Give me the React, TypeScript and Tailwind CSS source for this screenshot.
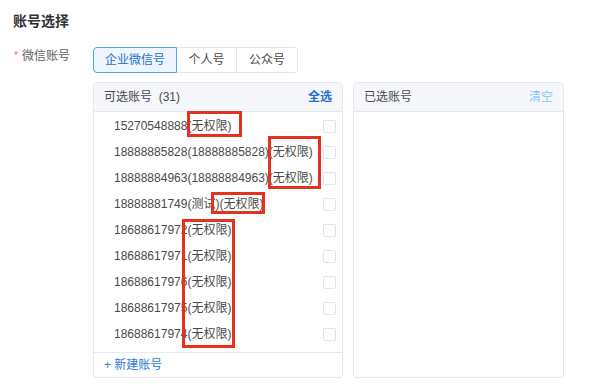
import React from "react";

const rows: { num: string; extra?: string }[] = [
  { num: "15270548888" },
  { num: "18888885828", extra: "(18888885828)" },
  { num: "18888884963", extra: "(18888884963)" },
  { num: "18888881749", extra: "(测试)" },
  { num: "18688617972" },
  { num: "18688617971" },
  { num: "18688617976" },
  { num: "18688617975" },
  { num: "18688617974" },
];

const font = { fontFamily: '"Liberation Sans", "Noto Sans CJK SC", sans-serif' };

export default function App() {
  return (
    <div
      className="relative w-[591px] h-[388px] bg-white pl-[13px] pt-[11px] text-[#333]"
      style={font}
    >
      <div className="text-[14px] font-bold leading-[20px] text-[#303133]">账号选择</div>
      <div className="flex mt-[16px]">
        <div className="w-[80px] flex items-start pt-[1px] text-[12px] leading-[16px] text-[#606266]">
          <span className="text-[#f56c6c] text-[10px] mr-[4px] ml-[1px]">*</span>
          <span>微信账号</span>
        </div>
        <div className="flex flex-col">
          <div className="flex h-[26px] text-[12px]">
            <div className="w-[84px] flex items-center justify-center rounded-l-[4px] border border-[#5a9ef0] bg-[#eef5fe] text-[#2570c9]">
              企业微信号
            </div>
            <div className="w-[60px] flex items-center justify-center border-y border-r border-[#e2e5ea] text-[#4a4a4a]">
              个人号
            </div>
            <div className="w-[61px] flex items-center justify-center rounded-r-[4px] border-y border-r border-[#e2e5ea] text-[#4a4a4a]">
              公众号
            </div>
          </div>
          <div className="flex gap-[10px] mt-[9px]">
            <div className="w-[250px] h-[296px] rounded-[4px] border border-[#e4e7ed] flex flex-col overflow-hidden">
              <div className="h-[29px] shrink-0 flex items-center justify-between px-[10px] bg-[#f5f7fa] border-b border-[#e4e7ed] text-[12px]">
                <span className="text-[#4a4a4a]">可选账号&nbsp;&nbsp;(31)</span>
                <span className="text-[#1f6fd0] font-bold">全选</span>
              </div>
              <div className="flex-1 flex flex-col pt-[1px]">
                {rows.map((r) => (
                  <div key={r.num} className="h-[26px] flex items-center justify-between pl-[20px] pr-[6px] text-[12px] text-[#4a4a4a]">
                    <span>
                      {r.num}
                      {r.extra ?? ""}(无权限)
                    </span>
                    <span className="w-[13px] h-[13px] rounded-[2px] border border-[#e0e3e8] bg-white" />
                  </div>
                ))}
              </div>
              <div className="h-[25px] shrink-0 flex items-center px-[10px] border-t border-[#e4e7ed] text-[12px] text-[#2b79d8]">
                + 新建账号
              </div>
            </div>
            <div className="w-[211px] h-[296px] rounded-[4px] border border-[#e4e7ed] flex flex-col overflow-hidden">
              <div className="h-[29px] shrink-0 flex items-center justify-between px-[10px] bg-[#f5f7fa] border-b border-[#e4e7ed] text-[12px]">
                <span className="text-[#4a4a4a]">已选账号</span>
                <span className="text-[#8cc5ff]">清空</span>
              </div>
              <div className="flex-1" />
            </div>
          </div>
        </div>
      </div>

      {/* annotation boxes */}
      <div className="absolute left-[187px] top-[111px] w-[55px] h-[26px] border-[3px] border-[#e5321f]" />
      <div className="absolute left-[268px] top-[136px] w-[53px] h-[53px] border-[3px] border-[#e5321f]" />
      <div className="absolute left-[211px] top-[192px] w-[54px] h-[22px] border-[3px] border-[#e5321f]" />
      <div className="absolute left-[182px] top-[219px] w-[53px] h-[129px] border-[3px] border-[#e5321f]" />
    </div>
  );
}
